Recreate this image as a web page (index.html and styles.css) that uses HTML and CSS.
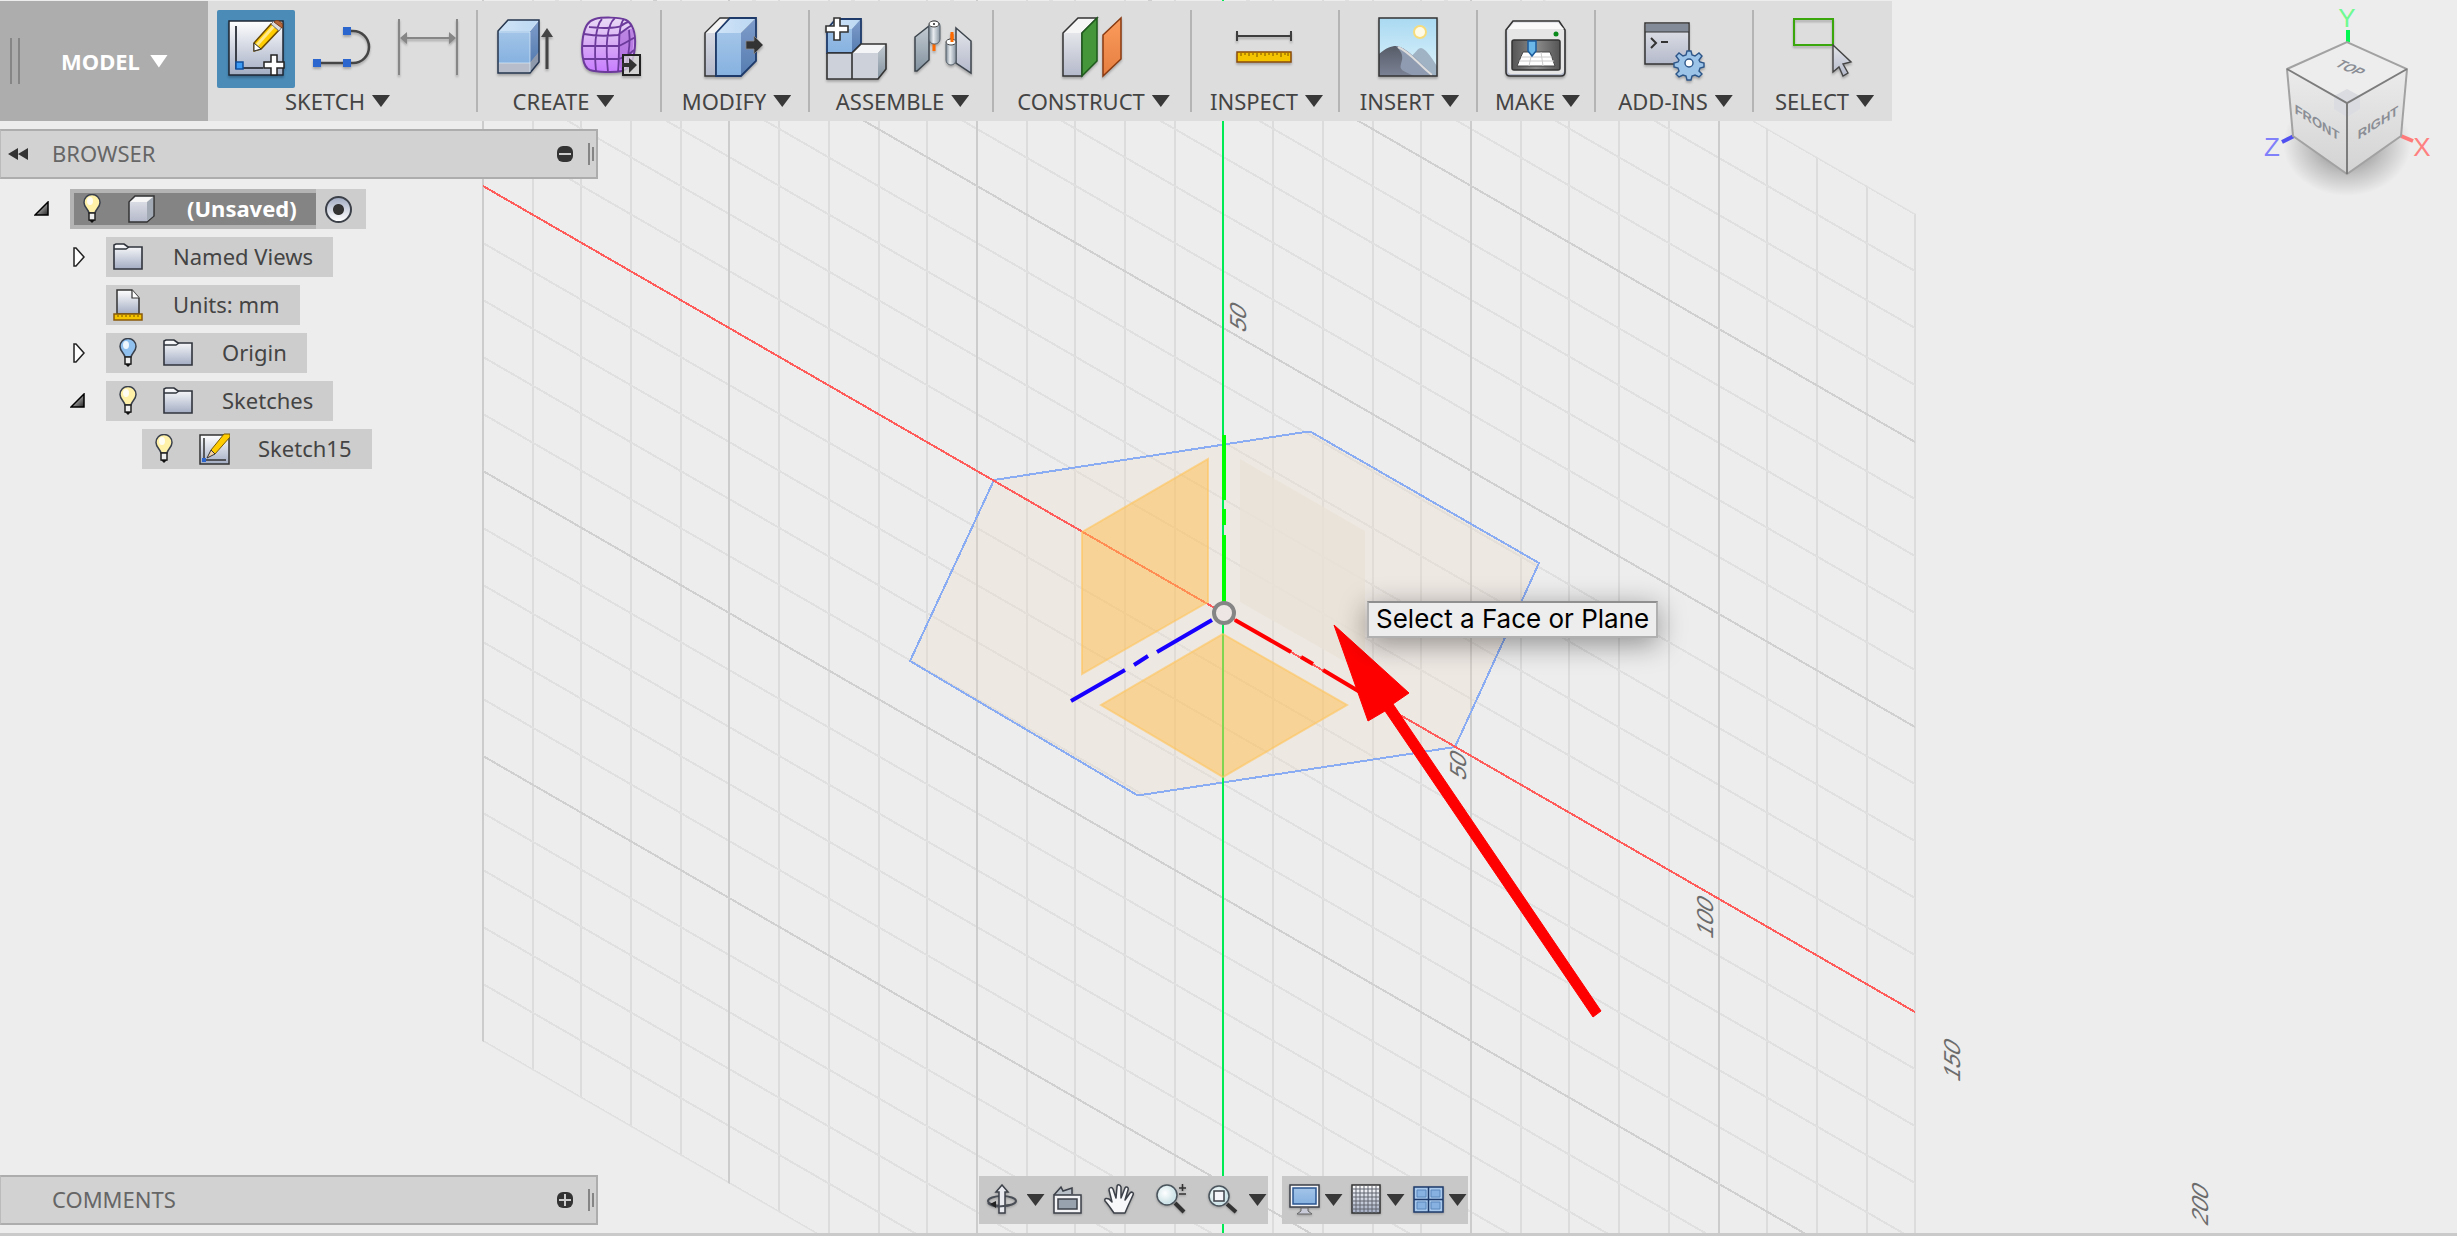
FILE: index.html
```html
<!DOCTYPE html>
<html lang="en">
<head>
<meta charset="utf-8">
<title>Model workspace</title>
<link rel="stylesheet" href="styles.css">
</head>
<body>
<svg class="defs" aria-hidden="true">
  <defs>
    <linearGradient id="sheet" x1="0" y1="0" x2="0" y2="1"><stop offset="0" stop-color="#fff"/><stop offset="1" stop-color="#a3adc3"/></linearGradient>
    <linearGradient id="silver" x1="0" y1="0" x2="0" y2="1"><stop offset="0" stop-color="#e4e6ea"/><stop offset="1" stop-color="#b4b9cb"/></linearGradient>
    <linearGradient id="blue" x1="0" y1="0" x2="0" y2="1"><stop offset="0" stop-color="#a3c5e8"/><stop offset="1" stop-color="#86b1e0"/></linearGradient>
    <linearGradient id="blueside" x1="0" y1="0" x2="0" y2="1"><stop offset="0" stop-color="#7f9dcb"/><stop offset="1" stop-color="#557cb0"/></linearGradient>
    <linearGradient id="bluetop" x1="0" y1="0" x2="1" y2="0"><stop offset="0" stop-color="#cfe3f6"/><stop offset="1" stop-color="#bcd8f3"/></linearGradient>
    <linearGradient id="purple" x1="0" y1="0" x2="0" y2="1"><stop offset="0" stop-color="#eadcf6"/><stop offset=".5" stop-color="#d6a9f5"/><stop offset="1" stop-color="#c87cff"/></linearGradient>
    <linearGradient id="tube" x1="0" y1="0" x2="1" y2="0"><stop offset="0" stop-color="#7d8a96"/><stop offset=".4" stop-color="#e8ecf0"/><stop offset="1" stop-color="#8794a1"/></linearGradient>
    <linearGradient id="steel" x1="0" y1="0" x2="0" y2="1"><stop offset="0" stop-color="#c3cbd2"/><stop offset="1" stop-color="#82929f"/></linearGradient>
    <linearGradient id="orange" x1="0" y1="0" x2="0" y2="1"><stop offset="0" stop-color="#fb9c5c"/><stop offset="1" stop-color="#e57e40"/></linearGradient>
    <linearGradient id="sky" x1="0" y1="0" x2="0" y2="1"><stop offset="0" stop-color="#a9d9f1"/><stop offset="1" stop-color="#dff4fc"/></linearGradient>
    <linearGradient id="rock" x1="0" y1="0" x2="0" y2="1"><stop offset="0" stop-color="#575c68"/><stop offset="1" stop-color="#7b8294"/></linearGradient>
    <linearGradient id="screen" x1="0" y1="0" x2="1" y2="0"><stop offset="0" stop-color="#555"/><stop offset=".5" stop-color="#8c8c8c"/><stop offset="1" stop-color="#555"/></linearGradient>
    <linearGradient id="face" x1="0" y1="0" x2="0" y2="1"><stop offset="0" stop-color="#ebebeb"/><stop offset="1" stop-color="#d3d3d3"/></linearGradient>
    <radialGradient id="glow"><stop offset="0" stop-color="#000" stop-opacity=".5"/><stop offset=".6" stop-color="#000" stop-opacity=".18"/><stop offset="1" stop-color="#000" stop-opacity="0"/></radialGradient>
    <radialGradient id="lens" cx=".4" cy=".4"><stop offset="0" stop-color="#fff"/><stop offset="1" stop-color="#cfe4e8"/></radialGradient>
    <linearGradient id="fade" x1="0" y1="0" x2="1" y2="1"><stop offset="0" stop-color="#fff"/><stop offset="1" stop-color="#222"/></linearGradient>
    <symbol id="bulb" viewBox="0 0 20 30"><path d="M7 19C6 15 2 13 2 8.500a8 8 0 0 1 16 0C18 13 14 15 13 19z" fill="var(--glass)" stroke="#39404c" stroke-width="1.500"/><ellipse cx="8" cy="7" rx="3" ry="4" fill="#fff" opacity=".85"/><path d="M7 19h6v7H7z" fill="#eee" stroke="#222" stroke-width="1.500"/><path d="M7 26h6l-3 3z" fill="#111"/></symbol>
    <symbol id="folder" viewBox="0 0 32 28"><path d="M2 26V2l2-1h8l4 3h14v22z" fill="url(#sheet)" stroke="#30343c" stroke-width="1.600"/><path d="M2 6h12l3-2" fill="none" stroke="#30343c" stroke-width="1.400"/></symbol>
    <symbol id="open" viewBox="0 0 16 16"><path d="M14 1v13H1z" fill="url(#fade)" stroke="#000" stroke-width="1.500"/></symbol>
    <symbol id="closed" viewBox="0 0 14 20"><path d="M2 1l2 0 8 9-8 9H2z" fill="#fff" stroke="#222" stroke-width="1.500"/></symbol>
    <clipPath id="ground"><path d="M482-612L1916 214V1868L482 1041z"/></clipPath>
  </defs>
</svg>

<div class="app">
  <!-- Modelling canvas -->
  <svg class="canvas" viewBox="0 0 2457 1236" preserveAspectRatio="xMidYMid slice" role="img" aria-label="Construction planes on the sketch grid">
    <g clip-path="url(#ground)" fill="none" stroke-width="2">
      <path class="minor" d="M533 0V1236M581 0V1236M631 0V1236M681 0V1236M779 0V1236M829 0V1236M879 0V1236M927 0V1236M1027 0V1236M1075 0V1236M1125 0V1236M1175 0V1236M1273 0V1236M1323 0V1236M1373 0V1236M1421 0V1236M1521 0V1236M1569 0V1236M1619 0V1236M1669 0V1236M1767 0V1236M1817 0V1236M1867 0V1236M1915 0V1236"/>
      <path class="minor slant" d="M483-612l1432 826M483-555l1432 826M483-498l1432 826M483-441l1432 826M483-327l1432 826M483-270l1432 826M483-213l1432 826M483-156l1432 826M483-42l1432 826M483 15l1432 826M483 72l1432 826M483 129l1432 826M483 243l1432 826M483 300l1432 826M483 357l1432 826M483 414l1432 826M483 528l1432 826M483 585l1432 826M483 642l1432 826M483 699l1432 826M483 813l1432 826M483 870l1432 826M483 927l1432 826M483 984l1432 826M483 1041l1432 826"/>
      <path class="major" d="M483 0V1236M729 0V1236M977 0V1236M1471 0V1236M1719 0V1236"/>
      <path class="major slant" d="M483-384l1432 826M483-99l1432 826M483 471l1432 826M483 756l1432 826"/>
    </g>
    <path class="profile" d="M994 480L1305 432h6L1539 563 1455 747 1141 795h-4L910 661z"/>
    <path class="x-axis" d="M483 186L1915 1012"/>
    <path class="y-axis" d="M1223 0V1236"/>
    <path class="plane" d="M1082 532L1208 459V602L1082 674z"/>
    <path class="plane" d="M1223 634L1347 705 1223 777 1101 705z"/>
    <path class="plane-hover" d="M1240 459L1365 531V673L1240 602z"/>
    <g class="triad">
      <path stroke="#0f0" d="M1224 435V500M1224 509V525M1224 535V602"/>
      <path stroke="#f00" d="M1235 620L1291 652M1301 657L1313 664M1323 670L1360 692"/>
      <path stroke="#1800ff" d="M1212 620L1157 652M1148 656L1134 665M1125 670L1071 701"/>
      <circle cx="1224" cy="613" r="10" fill="#eee6e4" stroke="#858585"/>
    </g>
    <g class="ticks">
      <text transform="translate(1246 334) rotate(-90) skewX(-30)">50</text>
      <text transform="translate(1466 782) rotate(-90) skewX(-30)">50</text>
      <text transform="translate(1713 940) rotate(-90) skewX(-30)">100</text>
      <text transform="translate(1960 1083) rotate(-90) skewX(-30)">150</text>
      <text transform="translate(2208 1227) rotate(-90) skewX(-30)">200</text>
    </g>
    <path fill="#f00" d="M1334 625L1409 693 1393 704 1601 1011 1593 1017 1385 711 1368 721z" stroke="#f00" stroke-width="1"/>
    <g class="cube">
      <ellipse cx="2347" cy="144" rx="64" ry="52" fill="url(#glow)"/>
      <path class="stem" stroke="#00f850" d="M2348 30V42"/>
      <path class="stem" stroke="#5050f0" d="M2282 142L2294 136"/>
      <path class="stem" stroke="#ff7a7a" d="M2401 136L2413 141"/>
      <path d="M2287 69L2347 42 2407 69 2347 103z" fill="#ededed"/>
      <path d="M2287 69L2347 103V174L2293 136z" fill="url(#face)"/>
      <path d="M2407 69L2347 103V174L2401 136z" fill="url(#face)"/>
      <path d="M2334 96L2347 89 2360 96V109L2347 117 2334 109z" fill="#dadce2"/>
      <path d="M2287 69L2347 42 2407 69 2401 136 2347 174 2293 136z" fill="none" stroke="#a2a2a2" stroke-width="2"/>
      <path d="M2287 69L2347 103 2407 69M2347 103V174" fill="none" stroke="#7c7c7c" stroke-width="2"/>
      <text class="side" transform="translate(2317 127) skewY(32)">FRONT</text>
      <text class="side" transform="translate(2378 127) skewY(-32)">RIGHT</text>
      <text class="side" transform="translate(2346 71) rotate(24) skewX(-32)">TOP</text>
      <text class="axis" x="2347" y="27" fill="#70fa90">Y</text>
      <text class="axis" x="2272" y="156" fill="#8080fa">Z</text>
      <text class="axis" x="2422" y="156" fill="#ff8080">X</text>
    </g>
  </svg>
  <div class="tooltip" role="tooltip">Select a Face or Plane</div>

  <header class="toolbar">
    <div class="workspace">
      <span class="grip"></span>
      <button class="workspace-menu">MODEL <i class="caret"></i></button>
    </div>
    <section class="group w-sketch multi">
      <div class="tools">
        <button class="tool active" aria-label="Create Sketch"><svg viewBox="0 0 78 78"><rect x="12" y="11" width="54" height="54" fill="url(#sheet)" stroke="#1f2735" stroke-width="1.500"/><path d="M19 16V58H46" fill="none" stroke="#3a3f48" stroke-width="2"/><rect x="19" y="52" width="7" height="7" fill="#3b9bf5" stroke="#114f9e" stroke-width="1.500"/><path d="M37 33L54 14 62 20 44 39 37 41z" fill="#fc0" stroke="#6b4a00" stroke-width="1.500"/><path d="M40 35L57 16" stroke="#ffe98a" stroke-width="3"/><path d="M37 33l7 6-7 2z" fill="#fff" stroke="#333"/><path d="M54 14l3-3 8 6-3 4z" fill="#ddd" stroke="#777"/><path d="M57 12c3-4 11 1 8 6z" fill="#b5673a" stroke="#7a3f1c"/><path d="M54 45h6v7h7v6h-7v7h-6v-7h-7v-6h7z" fill="#fff" stroke="#222" stroke-width="1.500"/></svg></button>
        <button class="tool" aria-label="Spline"><svg viewBox="0 0 78 78"><path d="M44 21h6a16 16 0 0 1 0 32H14" fill="none" stroke="#454545" stroke-width="2.500"/><path d="M40 17h8v8h-8zM10 49h8v8h-8zM40 49h8v8h-8z" fill="#2b66cf"/></svg></button>
        <button class="tool" aria-label="Sketch Dimension"><svg viewBox="0 0 78 78"><path d="M10 9V65M68 9V65M12 28H66" stroke="#868686" stroke-width="2" fill="none"/><path d="M11 28l7-6v12zM67 28l-7-6v12z" fill="#868686"/></svg></button>
      </div>
      <button class="menu">SKETCH <i class="caret"></i></button>
    </section>
    <section class="group w-m multi">
      <div class="tools">
        <button class="tool" aria-label="Extrude"><svg viewBox="0 0 78 78"><path d="M12 21H44V53H12z" fill="url(#blue)"/><path d="M44 21L53 10V42L44 53z" fill="url(#blueside)"/><path d="M12 21L22 10H53L44 21z" fill="url(#bluetop)"/><path d="M12 53H44V63H12z" fill="#b7bdca"/><path d="M44 53L53 42V52L44 63z" fill="#8f99ac"/><path d="M12 21L22 10H53V52L44 63H12z" fill="none" stroke="#26364f" stroke-width="1.500"/><path d="M13 22H44V62M44 21l8-10M13 53H44" fill="none" stroke="#dcecfa" opacity=".7"/><path d="M61 59V25" stroke="#444" stroke-width="3"/><path d="M55 27l6-9 6 9z" fill="#444"/></svg></button>
        <button class="tool" aria-label="Create Form"><svg viewBox="0 0 78 78"><path d="M23 9C30 7 48 7 54 10 60 13 64 22 63 36 62 50 58 59 50 61 42 63 24 62 18 60 10 57 9 40 11 27 13 16 16 11 23 9z" fill="url(#purple)" stroke="#6b3a9b" stroke-width="2"/><path d="M46 25C54 20 60 17 61 20 63 34 60 52 50 60 46 58 47 40 46 25z" fill="#a45ed6" opacity=".6"/><path d="M12 24C22 26 36 26 46 25 54 19 58 16 59 16M10 36H47C56 32 61 28 62 28M11 49H47C56 46 60 42 62 40M17 17C30 18 42 19 49 16 53 13 56 12 57 12M30 9C23 16 22 40 24 61M43 8C33 16 34 42 36 62M52 9C45 16 48 44 46 62M57 20C59 34 56 48 54 57" fill="none" stroke="#6b3a9b" stroke-width="1.800"/><rect x="51" y="45" width="17" height="20" fill="#ddd" fill-opacity=".75" stroke="#222" stroke-width="2"/><path d="M50 53h7v-5l8 7-8 8v-6h-7z" fill="#333"/></svg></button>
      </div>
      <button class="menu">CREATE <i class="caret"></i></button>
    </section>
    <section class="group w-s">
      <div class="tools"><button class="tool" aria-label="Press Pull"><svg viewBox="0 0 78 78"><path d="M10 23L25 8H35L21 23V66H10z" fill="url(#silver)" stroke="#333" stroke-width="1.500"/><path d="M11 23L25 9H34L21 23z" fill="#f4f4f4"/><path d="M21 23H46V66H21z" fill="url(#blue)"/><path d="M21 23L35 8H61L46 23z" fill="url(#bluetop)"/><path d="M46 23L61 8V51L46 66z" fill="url(#blueside)"/><path d="M21 23L35 8H61V51L46 66H21z" fill="none" stroke="#1d3a6b" stroke-width="1.800"/><path d="M51 31h8v-5l9 9-9 9v-5h-8z" fill="#333" stroke="#8a8a8a" stroke-width=".8"/></svg></button></div>
      <button class="menu">MODIFY <i class="caret"></i></button>
    </section>
    <section class="group w-m">
      <div class="tools">
        <button class="tool" aria-label="New Component"><svg viewBox="0 0 78 78"><path d="M9 19L18 9H43V34L34 43H9z" fill="url(#blue)"/><path d="M9 19L18 9H43L34 19z" fill="url(#bluetop)"/><path d="M34 19l9-10V34l-9 9z" fill="url(#blueside)"/><path d="M9 43L9 19 18 9H43V34L34 43z" fill="none" stroke="#1d3a6b" stroke-width="1.800"/><path d="M9 43H60V69H9z" fill="#ccd1da"/><path d="M34 43L43 34H68L60 43z" fill="#f4f5f6"/><path d="M60 43l8-9V59l-8 10z" fill="url(#steel)"/><path d="M9 43V69H60L68 59V34H43L34 43V69M9 43H34" fill="none" stroke="#333" stroke-width="1.600"/><path d="M16 8h6v8h8v6h-8v8h-6v-8H8v-6h8z" fill="#fff" stroke="#333" stroke-width="1.600"/></svg></button>
        <button class="tool" aria-label="Joint"><svg viewBox="0 0 78 78"><path d="M11 27L25 16V50L13 61H11z" fill="url(#steel)" stroke="#3c444c" stroke-width="1.500"/><path d="M30 33v8M48 22v10" stroke="#ff6a00" stroke-width="3"/><rect x="25" y="11" width="11" height="23" rx="5" fill="url(#tube)" stroke="#59636d"/><ellipse cx="30" cy="14" rx="5" ry="3" fill="#fff" stroke="#444"/><circle cx="30" cy="14" r="1" fill="#222"/><path d="M52 18L67 31V63L52 53z" fill="url(#silver)" stroke="#3c444c" stroke-width="1.500"/><rect x="42" y="29" width="10" height="26" rx="5" fill="url(#tube)" stroke="#59636d"/><ellipse cx="47" cy="32" rx="5" ry="3" fill="#fff" stroke="#444"/><path d="M48 24v8" stroke="#ff6a00" stroke-width="3"/></svg></button>
      </div>
      <button class="menu">ASSEMBLE <i class="caret"></i></button>
    </section>
    <section class="group w-l">
      <div class="tools"><button class="tool" aria-label="Offset Plane"><svg viewBox="0 0 78 78"><path d="M11 23H30V66H11z" fill="url(#silver)"/><path d="M11 23L26 8H45L30 23z" fill="#f6f6f6"/><path d="M11 23L26 8H45L30 23V66H11z" fill="none" stroke="#333" stroke-width="1.500"/><path d="M30 23L45 8V51L30 66z" fill="#45953a" stroke="#1e5a1b" stroke-width="1.500"/><path d="M51 25L69 8V49L51 66z" fill="url(#orange)" stroke="#8a3a10" stroke-width="1.500"/></svg></button></div>
      <button class="menu">CONSTRUCT <i class="caret"></i></button>
    </section>
    <section class="group w-s">
      <div class="tools"><button class="tool" aria-label="Measure"><svg viewBox="0 0 78 78"><path d="M12 26H66M12 21V31M66 21V31" stroke="#3d3d3d" stroke-width="2" fill="none"/><rect x="12" y="42" width="54" height="10" fill="#f5c400" stroke="#8a4b0a" stroke-width="1.500"/><path d="M16 43v3M20 43v2M24 43v3M28 43v2M32 43v4M36 43v2M40 43v3M44 43v2M48 43v3M52 43v2M56 43v4M60 43v2M63 43v3" stroke="#7a5200"/></svg></button></div>
      <button class="menu">INSPECT <i class="caret"></i></button>
    </section>
    <section class="group w-insert">
      <div class="tools"><button class="tool" aria-label="Insert Canvas"><svg viewBox="0 0 78 78"><rect x="11" y="8" width="58" height="58" fill="url(#sky)"/><circle cx="52" cy="22" r="7" fill="#f7dc7c"/><circle cx="52" cy="22" r="5" fill="#fffbe6"/><path d="M42 48C47 43 50 38 53 38 57 38 64 48 69 56V66H46z" fill="#9fb3c4"/><path d="M11 44C18 38 23 36 28 36 38 37 48 50 66 66H11z" fill="url(#rock)"/><path d="M28 36c9 9 6 14 5 18-2 6 2 7 13 12H66C50 50 38 37 28 36z" fill="#8f9bb0"/><path d="M30 37C42 42 52 56 64 65" fill="none" stroke="#ddd" stroke-width="2"/><rect x="11" y="8" width="58" height="58" fill="none" stroke="#333" stroke-width="1.500"/></svg></button></div>
      <button class="menu">INSERT <i class="caret"></i></button>
    </section>
    <section class="group w-make">
      <div class="tools"><button class="tool" aria-label="3D Print"><svg viewBox="0 0 78 78"><path d="M10 20L17 11H63L69 20V62Q69 66 65 66H14Q10 66 10 62z" fill="url(#silver)" stroke="#333" stroke-width="1.600"/><path d="M12 21L18 13H62L68 21V61Q67 64 64 64H15Q12 64 12 61z" fill="#e6e6e6"/><path d="M12 19l6-6H62l6 6z" fill="#fafafa"/><circle cx="60" cy="24" r="2.500" fill="#0a8a1a"/><rect x="16" y="30" width="48" height="30" rx="2" fill="url(#screen)" stroke="#333" stroke-width="1.500"/><path d="M27 42H54L59 56H21z" fill="#fff" stroke="#444"/><path d="M25 47H56M23 51H58M36 42l-3 14M45 42l2 14" stroke="#ccc"/><path d="M32 31h8v10l-4 5-4-5z" fill="#6bb7e8" stroke="#1c5c9c" stroke-width="1.500"/></svg></button></div>
      <button class="menu">MAKE <i class="caret"></i></button>
    </section>
    <section class="group w-addins">
      <div class="tools"><button class="tool" aria-label="Scripts and Add-Ins"><svg viewBox="0 0 78 78"><rect x="11" y="13" width="44" height="41" fill="url(#silver)" stroke="#333" stroke-width="1.500"/><rect x="12" y="14" width="42" height="8" fill="#838b99"/><path d="M11 22H55" stroke="#333"/><path d="M17 28l5 5-5 5M27 32h7" fill="none" stroke="#333" stroke-width="2"/><g fill="#9cc3e8" stroke="#2c5588" stroke-width="1.400"><path d="M53 41h4l1 4 3 1 4-3 3 3-3 4 1 2 4 1v4l-4 1-1 3 3 3-3 3-4-2-3 1-1 4h-4l-1-4-3-1-4 2-3-3 3-3-1-3-4-1v-4l4-1 1-2-3-4 3-3 4 3 3-1z"/><circle cx="55" cy="53" r="4" fill="#fff"/></g></svg></button></div>
      <button class="menu">ADD-INS <i class="caret"></i></button>
    </section>
    <section class="group w-select">
      <div class="tools"><button class="tool" aria-label="Select"><svg viewBox="0 0 78 78"><rect x="11" y="9" width="39" height="26" fill="none" stroke="#3aa70c" stroke-width="2"/><path d="M50 35L68 52 60 54 65 63 60 66 56 57 50 62z" fill="url(#silver)" stroke="#444" stroke-width="1.400"/></svg></button></div>
      <button class="menu">SELECT <i class="caret"></i></button>
    </section>
  </header>

  <main class="workarea">
    <section class="panel">
      <button class="collapse" aria-label="Collapse browser"><svg viewBox="0 0 20 14"><path d="M10 1v12L0 7zM20 1v12L10 7z" fill="#333"/></svg></button>
      <h2>BROWSER</h2>
      <button class="round" aria-label="Minimise"><svg viewBox="0 0 16 16"><rect width="16" height="16" rx="6" fill="#333"/><path d="M2 8H14" stroke="#ccc" stroke-width="2"/></svg></button>
      <span class="panel-grip"></span>
    </section>
    <ul class="tree">
      <li class="row depth-1">
        <button class="twist" aria-label="Collapse"><svg width="16" height="16"><use href="#open"/></svg></button>
        <div class="item root"><div class="selected"><svg class="bulb on"><use href="#bulb"/></svg><svg class="icon" viewBox="0 0 32 28"><path d="M3 7L9 1H28V21L21 27H3z" fill="url(#silver)" stroke="#333" stroke-width="1.500"/><path d="M4 7l6-5h17l-6 5z" fill="#f6f6f6"/><path d="M21 7l6-5v19l-6 5z" fill="#a2aab5"/></svg><span>(Unsaved)</span></div><input type="radio" class="activate" checked aria-label="Activate component"></div>
      </li>
      <li class="row depth-2"><button class="twist" aria-label="Expand"><svg width="18" height="20"><use href="#closed"/></svg></button><div class="item"><svg class="icon"><use href="#folder"/></svg><span>Named Views</span></div></li>
      <li class="row depth-2"><span class="twist"></span><div class="item"><svg class="icon tall" viewBox="0 0 32 32"><path d="M5 1H20L27 9V25H5z" fill="url(#sheet)" stroke="#333" stroke-width="1.500"/><path d="M20 1v8h7" fill="#fff" stroke="#333" stroke-width="1.200"/><rect x="2" y="25" width="28" height="6" fill="#f5c400" stroke="#8a5a0a" stroke-width="1.500"/><path d="M6 26v2M10 26v2M14 26v2M18 26v2M22 26v2M26 26v2" stroke="#7a5200"/></svg><span>Units: mm</span></div></li>
      <li class="row depth-2"><button class="twist" aria-label="Expand"><svg width="18" height="20"><use href="#closed"/></svg></button><div class="item lit"><svg class="bulb off"><use href="#bulb"/></svg><svg class="icon"><use href="#folder"/></svg><span>Origin</span></div></li>
      <li class="row depth-2"><button class="twist" aria-label="Collapse"><svg width="16" height="16"><use href="#open"/></svg></button><div class="item lit"><svg class="bulb on"><use href="#bulb"/></svg><svg class="icon"><use href="#folder"/></svg><span>Sketches</span></div></li>
      <li class="row depth-3"><span class="twist"></span><div class="item lit"><svg class="bulb on"><use href="#bulb"/></svg><svg class="icon tall" viewBox="0 0 32 32"><rect x="2" y="2" width="29" height="29" fill="url(#sheet)" stroke="#333" stroke-width="1.500"/><path d="M6 5V27H28" fill="none" stroke="#333" stroke-width="1.500"/><rect x="4" y="25" width="4" height="4" fill="#2b66cf"/><path d="M13 17L26 1h6v3L17 21z" fill="#fc0" stroke="#7a5a00"/><path d="M13 17l4 4-8 4z" fill="#f3cfa0" stroke="#333"/></svg><span>Sketch15</span></div></li>
    </ul>
  </main>

  <footer class="bottom">
    <section class="panel">
      <span class="collapse"></span>
      <h2>COMMENTS</h2>
      <button class="round" aria-label="Expand comments"><svg viewBox="0 0 16 16"><rect width="16" height="16" rx="6" fill="#333"/><path d="M2 8H14M8 2V14" stroke="#ccc" stroke-width="2"/></svg></button>
      <span class="panel-grip"></span>
    </section>
    <nav class="views">
      <div class="strip">
        <button class="nav" aria-label="Orbit"><svg viewBox="0 0 32 32"><ellipse cx="16" cy="17" rx="14" ry="5" fill="none" stroke="#4a4e56" stroke-width="2"/><path d="M13 29V8H10L16 1l6 7h-3v21z" fill="#e8eaf0" stroke="#3c4048" stroke-width="1.500"/><path d="M2 19c4 4 13 4 22 2" fill="none" stroke="#4a4e56" stroke-width="2"/><path d="M4 20l6-3v7z" fill="#222"/></svg></button>
        <button class="more orbit" aria-label="Orbit options"><i class="caret"></i></button>
        <button class="nav spaced" aria-label="Look At"><svg viewBox="0 0 32 32"><path d="M3 11L10 3 12 7 21 4V10" fill="#b9c0c8" stroke="#3c4048" stroke-width="1.500"/><rect x="3" y="11" width="27" height="18" fill="#f4f4f6" stroke="#3c4048" stroke-width="1.500"/><rect x="7" y="15" width="19" height="10" fill="#98a2ae" stroke="#3c4048" stroke-width="1.500"/></svg></button>
        <button class="nav spaced" aria-label="Pan"><svg viewBox="0 0 32 32"><path d="M11 29C8 25 5 20 2 17 1 14 4 14 6 15L9 18 6 6C6 3 9 3 10 5L13 14 14 3C14 0 17 0 18 3V14L22 4C23 2 26 3 25 6L22 16 27 9C29 7 31 9 30 11L25 22 22 29z" fill="#f8f8fa" stroke="#3c4048" stroke-width="1.500" stroke-linejoin="round"/></svg></button>
        <button class="nav spaced" aria-label="Zoom"><svg viewBox="0 0 32 32"><path d="M20 19l9 9" stroke="#333" stroke-width="4"/><circle cx="12" cy="11" r="10" fill="url(#lens)" stroke="#4a545c" stroke-width="1.500"/><path d="M24 4h7M27.500 0v7M24 10h7" stroke="#333" stroke-width="1.500"/></svg></button>
        <button class="nav" aria-label="Fit"><svg viewBox="0 0 32 32"><path d="M20 20l9 8" stroke="#333" stroke-width="4"/><circle cx="12" cy="12" r="10" fill="url(#lens)" stroke="#4a545c" stroke-width="1.500"/><rect x="7" y="7" width="10" height="10" fill="#f6f6fa" stroke="#3c4048" stroke-width="1.500"/></svg></button>
        <button class="more fit" aria-label="Fit options"><i class="caret"></i></button>
      </div>
      <div class="strip">
        <button class="nav" aria-label="Display Settings"><svg viewBox="0 0 32 32"><rect x="1" y="1" width="29" height="22" fill="#f6f6f8" stroke="#3c4048" stroke-width="1.500"/><rect x="4" y="4" width="23" height="16" fill="url(#blue)" stroke="#2b5590" stroke-width="1.500"/><path d="M12 24h7v3l4 3H8l4-3z" fill="#c9ccd8" stroke="#666" /></svg></button>
        <button class="more" aria-label="Display options"><i class="caret"></i></button>
        <button class="nav" aria-label="Grid and Snaps"><svg viewBox="0 0 32 32"><rect x="1" y="1" width="28" height="28" fill="url(#sheet)" stroke="#333" stroke-width="1.500"/><path d="M5 1V29M9 1V29M13 1V29M17 1V29M21 1V29M25 1V29M1 5H29M1 9H29M1 13H29M1 17H29M1 21H29M1 25H29" stroke="#61656f"/></svg></button>
        <button class="more" aria-label="Grid options"><i class="caret"></i></button>
        <button class="nav" aria-label="Viewports"><svg viewBox="0 0 32 32"><rect x="1" y="3" width="29" height="25" fill="#a9c9ec" stroke="#1d3a6b" stroke-width="1.500"/><path d="M4 6h9v7H4zM18 6h9v7H18zM4 18h9v7H4zM18 18h9v7H18z" fill="#86b1e0" stroke="#5c88bd"/><path d="M15.500 3V28M1 15.500H30" stroke="#1d3a6b" stroke-width="1.500"/></svg></button>
        <button class="more" aria-label="Viewport options"><i class="caret"></i></button>
      </div>
    </nav>
  </footer>
</div>
</body>
</html>
```
FILE: styles.css
```css
* { box-sizing: border-box; }

body {
  margin: 0;
  background: #ededed;
  color: #444;
  font: 22px/30px "Noto Sans", "Open Sans", sans-serif;
}

button {
  margin: 0;
  padding: 0;
  border: 0;
  background: none;
  color: inherit;
  font: inherit;
}

svg { display: block; }
.defs { position: absolute; width: 0; height: 0; }

.app {
  position: relative;
  display: flex;
  flex-direction: column;
  min-height: 100vh;
  padding-top: 1px;
  border-bottom: 3px solid #cacaca;
  overflow: hidden;
}

/* Canvas */
.canvas { position: absolute; top: 0; left: 0; width: 100%; height: 100vh; }
.minor { stroke: #dcdcdc; shape-rendering: crispEdges; }
.major { stroke: #cccccc; shape-rendering: crispEdges; }
.minor.slant { stroke: #e0e0e0; }
.major.slant { stroke: #d0d0d0; }
.profile { fill: rgba(245, 221, 201, .25); stroke: #8aacf3; stroke-width: 2; shape-rendering: crispEdges; }
.x-axis { stroke: #ff5c5c; stroke-width: 2; shape-rendering: crispEdges; }
.y-axis { stroke: #00ea54; stroke-width: 2; }
.plane { fill: rgba(255, 189, 76, .5); stroke: rgba(255, 196, 90, .6); stroke-width: 2; }
.plane-hover { fill: rgba(232, 225, 213, .75); }
.triad { fill: none; stroke-width: 4; }
.ticks { fill: #6c6c6c; font: 23px/1 "Liberation Sans Narrow", "Liberation Sans", sans-serif; }
.stem { stroke-width: 4; }
.side { fill: #8b8e95; font: bold 13px/1 "Liberation Sans Narrow", "Liberation Sans", sans-serif; text-anchor: middle; }
.axis { font: 26px/1 "Liberation Sans Narrow", "Liberation Sans", sans-serif; text-anchor: middle; stroke: currentColor; stroke-width: 0; }

.tooltip {
  position: absolute;
  top: 601px;
  left: 1367px;
  padding: 0 7px 1px;
  border: 2px solid #b0b0b0;
  border-top-color: #8f8f8f;
  background: #ededed;
  box-shadow: 0 6px 28px rgba(0, 0, 0, .4);
  color: #000;
  font: 26px/32px Inter, sans-serif;
}

/* Toolbar */
.toolbar {
  position: relative;
  display: flex;
  align-self: flex-start;
  height: 120px;
  background: #ddd;
}
.workspace { display: flex; align-items: center; width: 208px; padding-left: 10px; background: #adadad; }
.grip { width: 10px; height: 46px; border: solid #868686; border-width: 0 2px; }
.workspace-menu { display: flex; align-items: center; gap: 10px; margin-left: 41px; color: #fff; font-weight: bold; }
.caret { width: 18px; height: 12px; background: #383838; clip-path: polygon(0 0, 100% 0, 50% 100%); }
.workspace-menu .caret { height: 13px; background: #fff; }

.group { position: relative; display: flex; flex-direction: column; align-items: center; padding-top: 9px; }
.group + .group::before { content: ""; position: absolute; top: 9px; left: 0; width: 2px; height: 102px; background: #b4b4b4; }
.tools { display: flex; gap: 8px; }
.tool { width: 78px; height: 78px; }
.tool svg { width: 78px; height: 78px; filter: drop-shadow(0 2px 1px rgba(0, 0, 0, .25)); }
.tool.active { border-radius: 2px; background: #4a8bb8; }
.menu { display: flex; align-items: center; gap: 7px; padding-left: 5px; line-height: 26px; }
.multi .menu { padding: 0 9px 0 0; }
.w-sketch { width: 268px; }
.w-s { width: 148px; }
.w-m { width: 184px; }
.w-l { width: 198px; }
.w-insert { width: 138px; }
.w-make { width: 118px; }
.w-addins { width: 158px; }
.w-select { width: 140px; }

/* Side panels */
.workarea { position: relative; flex: 1; padding-top: 8px; }
.panel {
  position: relative;
  display: flex;
  align-items: center;
  width: 598px;
  height: 50px;
  border: 2px solid #adadad;
  border-left: 1px solid #bbb;
  background: #d2d2d2;
  color: #666;
}
.collapse { width: 20px; margin: 0 24px 0 7px; }
.panel h2 { flex: 1; margin: 0; padding-bottom: 3px; font: inherit; }
.round { width: 16px; height: 16px; margin-right: 15px; }
.panel-grip { width: 6px; height: 22px; margin-right: 2px; border-left: 2px solid #858585; background: linear-gradient(#858585, #858585) right / 2px 14px no-repeat; }

/* Browser tree */
.tree { display: grid; gap: 8px; margin: 10px 0 0; padding: 0; list-style: none; }
.row { display: flex; align-items: center; height: 40px; }
.depth-1 { padding-left: 34px; }
.depth-2 { padding-left: 70px; }
.depth-3 { padding-left: 106px; }
.twist { width: 36px; }
.item { display: flex; align-items: center; height: 40px; padding: 0 20px 0 6px; background: #cdcdcd; }
.item span { padding: 0 0 2px 29px; }
.icon { width: 32px; height: 28px; }
.icon.tall { height: 32px; }
.bulb { width: 20px; height: 30px; }
.bulb.on { --glass: #fff1a8; }
.bulb.off { --glass: #8fc0ee; }
.item.lit { padding-left: 12px; }
.lit .icon { margin-left: 24px; }
.lit span { padding-left: 28px; }
.item.root { padding: 0 14px 0 0; }
.selected { display: flex; align-items: center; height: 40px; padding: 0 19px 0 8px; border: 4px solid #b4b4b4; border-right: 0; background: #848484; color: #fff; font-weight: bold; }
.selected .icon { margin-left: 24px; }
.activate {
  appearance: none;
  width: 27px;
  height: 27px;
  margin: 0 0 0 9px;
  border: 2px solid #3c4048;
  border-radius: 50%;
  background: radial-gradient(circle, #333 0 5px, transparent 6px), linear-gradient(#a3adc3, #fff);
}

/* Bottom bar */
.bottom {
  position: relative;
  display: grid;
  grid-template-columns: 1fr auto 1fr;
  align-items: center;
  padding: 0 11px 8px 0;
}
.views { display: flex; gap: 14px; }
.strip { display: flex; align-items: center; height: 48px; padding: 0 1px 0 7px; background: #c8c8c8; }
.nav { width: 32px; height: 32px; }
.nav svg { width: 32px; height: 32px; filter: drop-shadow(0 1px 1px rgba(0, 0, 0, .25)); }
.more { padding: 8px 8px 8px 4px; }
.more:last-child { padding-right: 0; }
.more.orbit { padding: 8px 6px 8px 9px; }
.more.fit { padding-left: 10px; }
.spaced { margin-right: 20px; }
.more .caret { display: block; }
```
